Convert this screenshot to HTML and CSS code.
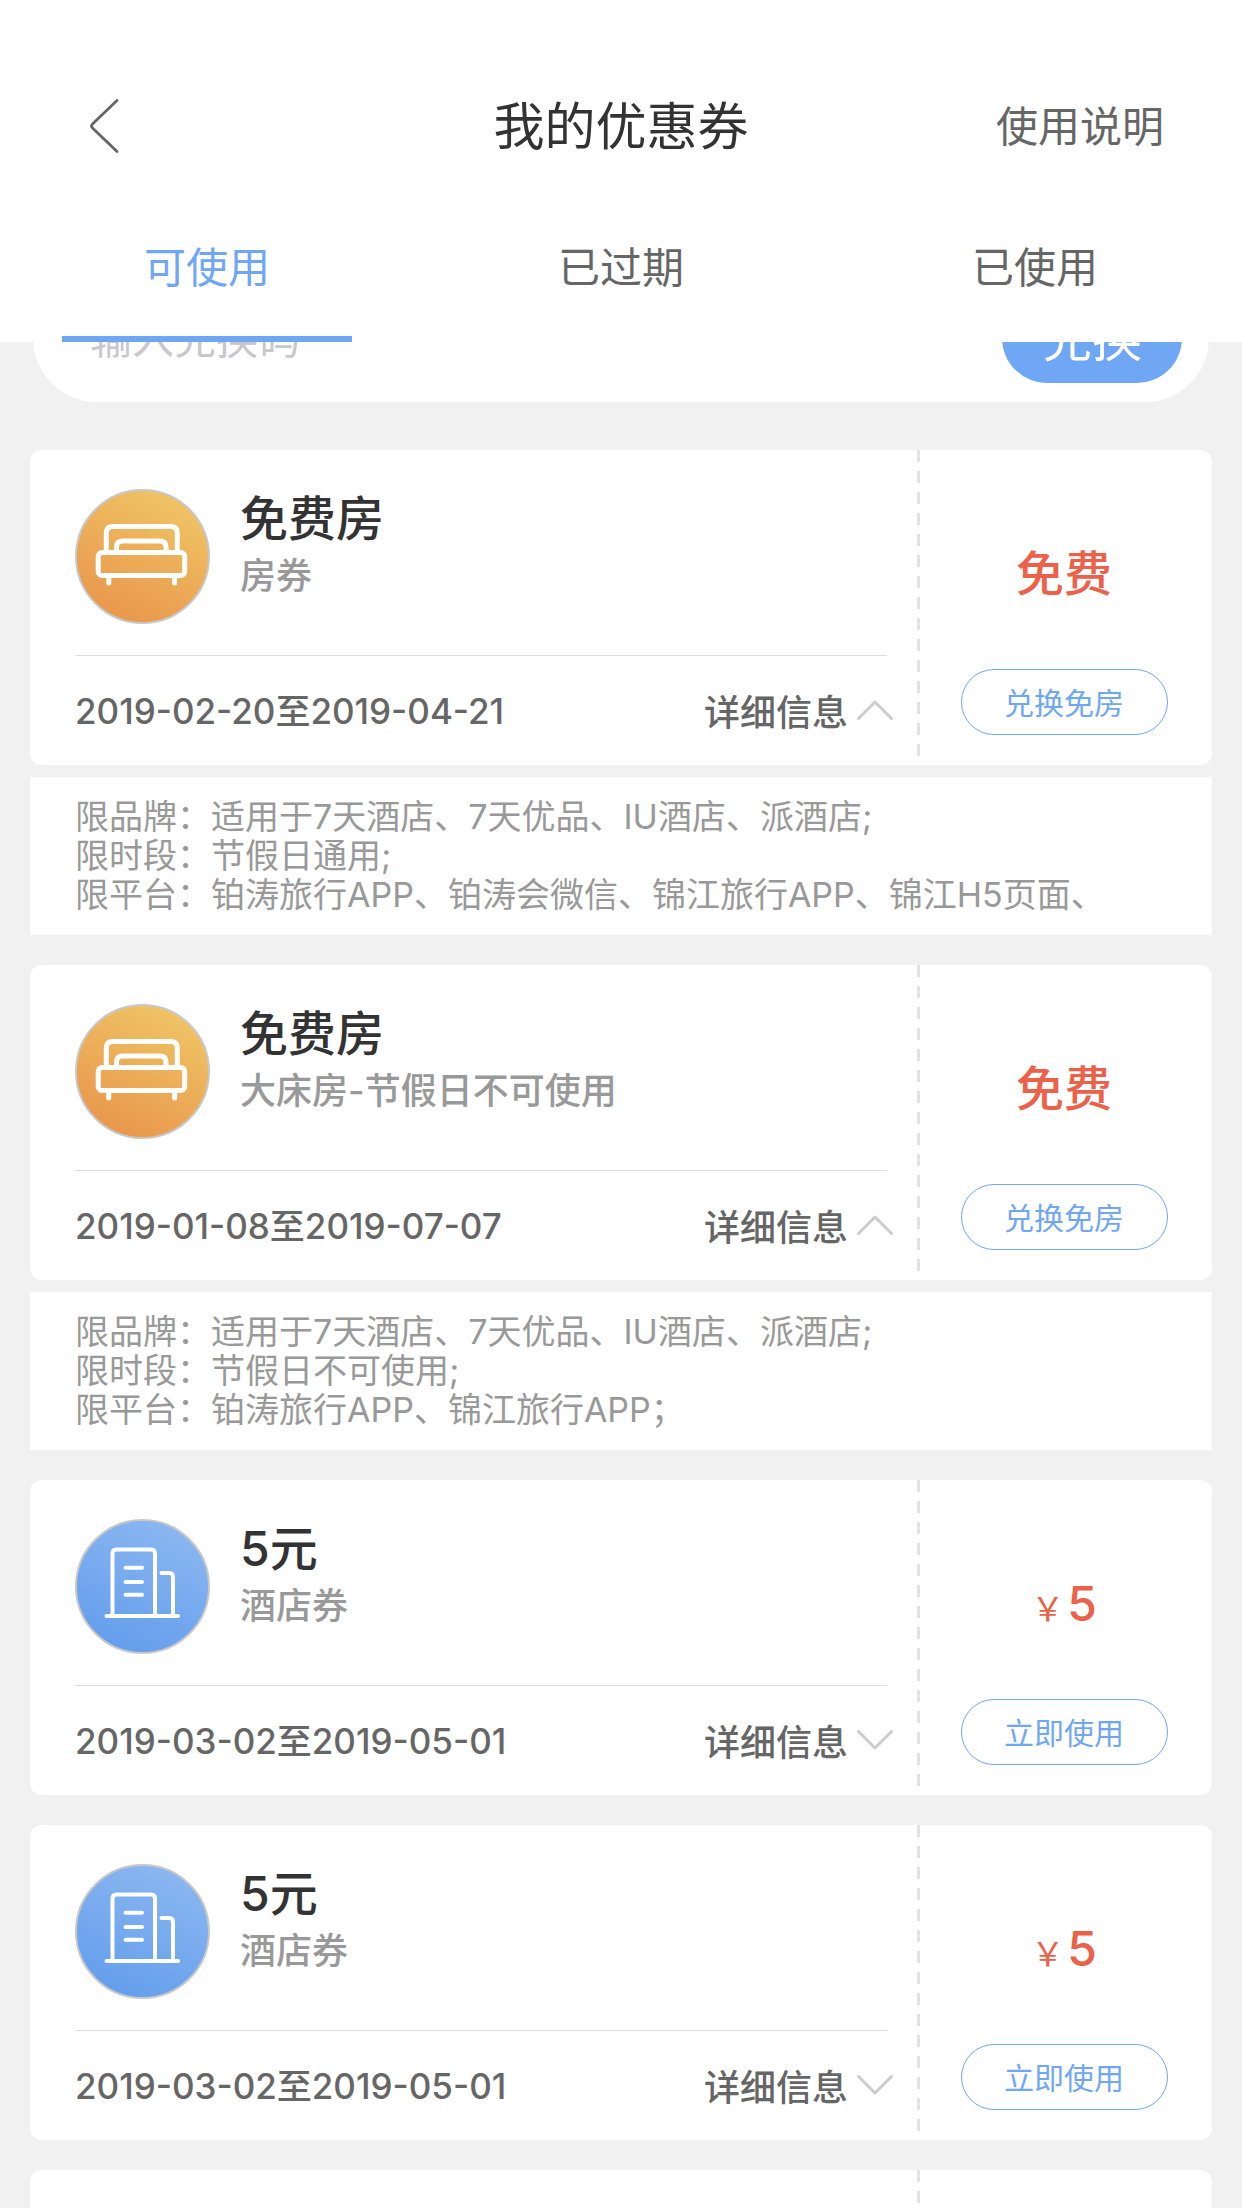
FILE: index.html
```html
<!DOCTYPE html>
<html lang="zh-CN">
<head>
<meta charset="utf-8">
<meta name="viewport" content="width=device-width, initial-scale=1">
<title>我的优惠券</title>
<link rel="stylesheet" href="styles.css">
</head>
<body>
<svg class="sprite" aria-hidden="true">
  <defs>
    <linearGradient id="gold" x1="0.3" y1="1" x2="0.75" y2="0.1">
      <stop offset="0" stop-color="#e9964b"/>
      <stop offset="1" stop-color="#efc264"/>
    </linearGradient>
    <linearGradient id="sky" x1="0.25" y1="1" x2="0.7" y2="0">
      <stop offset="0" stop-color="#629dec"/>
      <stop offset="1" stop-color="#8cb7f1"/>
    </linearGradient>
    <symbol id="bed" viewBox="0 0 135 135">
      <circle cx="67.500" cy="67.500" r="66.500" fill="url(#gold)" stroke="#c8c8c8" stroke-width="2"/>
      <g fill="none" stroke="#fff" stroke-width="5" stroke-linecap="round">
        <path d="M31.300 63V44q0-6.500 6.500-6.500h58q6.500 0 6.500 6.500v19"/>
        <path d="M41.500 63v-5q0-6 6-6h37.500q6 0 6 6v5"/>
        <rect x="23.200" y="63.500" width="86.500" height="23" rx="4"/>
        <path d="M33.800 87v7M99.600 87v7"/>
      </g>
    </symbol>
    <symbol id="building" viewBox="0 0 135 135">
      <circle cx="67.500" cy="67.500" r="66.500" fill="url(#sky)" stroke="#c8c8c8" stroke-width="2"/>
      <g fill="none" stroke="#fff" stroke-width="4" stroke-linecap="round">
        <path d="M37.500 97V34.500q0-4 4-4H76q4 0 4 4V97"/>
        <path d="M86.500 54H94q4 0 4 4v39"/>
        <path d="M31.500 97h71.500"/>
        <path d="M50.500 48.700H67M50.500 63H67M50.500 75.700H67"/>
      </g>
    </symbol>
    <symbol id="chevron" viewBox="0 0 36 20">
      <path d="M1.500 1.500 18 18 34.500 1.500" fill="none" stroke="#ccc" stroke-width="3" stroke-linecap="round" stroke-linejoin="round"/>
    </symbol>
  </defs>
</svg>

<div class="app">
  <header class="header">
    <div class="bar">
      <button class="back" type="button" aria-label="返回">
        <svg width="32" height="56" viewBox="0 0 32 56"><path d="M29 2.500 4.500 26q-2 2 0 4L29 53.500" fill="none" stroke="#666" stroke-width="2.800" stroke-linecap="round"/></svg>
      </button>
      <h1 class="title">我的优惠券</h1>
      <a class="help" href="#help">使用说明</a>
    </div>
    <nav class="tabs">
      <a class="tab tab-active" href="#usable">可使用</a>
      <a class="tab" href="#expired">已过期</a>
      <a class="tab" href="#used">已使用</a>
    </nav>
  </header>

  <main class="content">
    <form class="redeem">
      <input class="redeem-input" type="text" placeholder="输入兑换码" aria-label="输入兑换码">
      <button class="redeem-button" type="button">兑换</button>
    </form>

    <section class="list">
      <article class="coupon">
        <div class="card">
          <div class="info">
            <div class="summary">
              <svg class="badge"><use href="#bed"/></svg>
              <div>
                <h2 class="name">免费房</h2>
                <p class="kind">房券</p>
              </div>
            </div>
            <div class="meta">
              <span class="dates">2019-02-20至2019-04-21</span>
              <button class="toggle" type="button" aria-expanded="true">详细信息<svg class="chevron chevron-up"><use href="#chevron"/></svg></button>
            </div>
          </div>
          <div class="perforation"></div>
          <div class="action">
            <p class="price">免费</p>
            <button class="use" type="button">兑换免房</button>
          </div>
        </div>
        <div class="details">
          <p>限品牌：适用于7天酒店、7天优品、IU酒店、派酒店;</p>
          <p>限时段：节假日通用;</p>
          <p>限平台：铂涛旅行APP、铂涛会微信、锦江旅行APP、锦江H5页面、</p>
        </div>
      </article>

      <article class="coupon">
        <div class="card">
          <div class="info">
            <div class="summary">
              <svg class="badge"><use href="#bed"/></svg>
              <div>
                <h2 class="name">免费房</h2>
                <p class="kind">大床房-节假日不可使用</p>
              </div>
            </div>
            <div class="meta">
              <span class="dates">2019-01-08至2019-07-07</span>
              <button class="toggle" type="button" aria-expanded="true">详细信息<svg class="chevron chevron-up"><use href="#chevron"/></svg></button>
            </div>
          </div>
          <div class="perforation"></div>
          <div class="action">
            <p class="price">免费</p>
            <button class="use" type="button">兑换免房</button>
          </div>
        </div>
        <div class="details">
          <p>限品牌：适用于7天酒店、7天优品、IU酒店、派酒店;</p>
          <p>限时段：节假日不可使用;</p>
          <p>限平台：铂涛旅行APP、锦江旅行APP；</p>
        </div>
      </article>

      <article class="coupon">
        <div class="card">
          <div class="info">
            <div class="summary">
              <svg class="badge"><use href="#building"/></svg>
              <div>
                <h2 class="name">5元</h2>
                <p class="kind">酒店券</p>
              </div>
            </div>
            <div class="meta">
              <span class="dates">2019-03-02至2019-05-01</span>
              <button class="toggle" type="button" aria-expanded="false">详细信息<svg class="chevron"><use href="#chevron"/></svg></button>
            </div>
          </div>
          <div class="perforation"></div>
          <div class="action">
            <p class="price price-amount"><span class="currency">￥</span>5</p>
            <button class="use" type="button">立即使用</button>
          </div>
        </div>
      </article>

      <article class="coupon">
        <div class="card">
          <div class="info">
            <div class="summary">
              <svg class="badge"><use href="#building"/></svg>
              <div>
                <h2 class="name">5元</h2>
                <p class="kind">酒店券</p>
              </div>
            </div>
            <div class="meta">
              <span class="dates">2019-03-02至2019-05-01</span>
              <button class="toggle" type="button" aria-expanded="false">详细信息<svg class="chevron"><use href="#chevron"/></svg></button>
            </div>
          </div>
          <div class="perforation"></div>
          <div class="action">
            <p class="price price-amount"><span class="currency">￥</span>5</p>
            <button class="use" type="button">立即使用</button>
          </div>
        </div>
      </article>

      <article class="coupon">
        <div class="card">
          <div class="info"></div>
          <div class="perforation"></div>
          <div class="action"></div>
        </div>
      </article>
    </section>
  </main>
</div>
</body>
</html>
```
FILE: styles.css
```css
* {
  box-sizing: border-box;
}

body,
h1,
h2,
p {
  margin: 0;
}

body {
  background: #f1f1f1;
  color: #666;
  font-family: Inter, "Noto Sans CJK SC", sans-serif;
  font-size: 36px;
}

button,
input {
  padding: 0;
  border: 0;
  background: none;
  color: inherit;
  font: inherit;
}

a {
  color: inherit;
  text-decoration: none;
}

.sprite {
  display: block;
  width: 0;
  height: 0;
}

.app {
  display: flex;
  flex-direction: column;
  height: 100vh;
  overflow: hidden;
}

/* Header and tabs */
.header {
  flex: none;
  padding-top: 60px;
  background: #fff;
}

.bar {
  display: grid;
  grid-template-columns: 1fr auto 1fr;
  align-items: center;
  height: 132px;
  padding: 0 78px;
}

.back {
  display: flex;
  justify-self: start;
  padding-left: 10px;
}

.title,
.help {
  padding-bottom: 6px;
}

.title {
  color: #333;
  font-size: 51px;
  font-weight: 400;
}

.help {
  justify-self: end;
  font-size: 42px;
}

.tabs {
  display: grid;
  grid-template-columns: repeat(3, 1fr);
  height: 150px;
}

.tab {
  display: flex;
  align-items: center;
  justify-content: center;
  margin: 0 15%;
  border-bottom: 6px solid transparent;
  font-size: 42px;
}

.tab-active {
  border-bottom-color: #6fa7f5;
  color: #6fa7f5;
}

.content {
  flex: 1;
  min-height: 0;
  overflow: hidden;
}

.redeem {
  display: flex;
  align-items: center;
  height: 128px;
  margin: -68px 33px 48px;
  padding: 0 27px 0 57px;
  border-radius: 64px;
  background: #fff;
}

.redeem-input {
  flex: 1;
  min-width: 0;
  height: 90px;
  font-size: 42px;
}

.redeem-input::placeholder {
  color: #c7c7cc;
}

.redeem-button {
  width: 180px;
  height: 90px;
  padding-bottom: 6px;
  border-radius: 45px;
  background: #6fa7f5;
  color: #fff;
  font-size: 50px;
}

/* Coupons */
.list {
  display: flex;
  flex-direction: column;
  gap: 30px;
  padding: 0 30px;
}

.card {
  display: grid;
  grid-template-columns: 1fr 3px 292px;
  min-height: 315px;
  border-radius: 12px;
  background: #fff;
}

.info {
  display: flex;
  flex-direction: column;
  padding: 39px 24px 0 45px;
}

.summary {
  display: flex;
  gap: 30px;
  height: 167px;
  margin-right: 6px;
  border-bottom: 1px solid #ddd;
}

.badge {
  flex: none;
  width: 135px;
  height: 135px;
}

.name {
  color: #333;
  font-size: 48px;
  font-weight: 500;
  line-height: 60px;
}

.kind {
  color: #999;
  font-weight: 500;
  line-height: 54px;
}

.meta {
  display: flex;
  flex: 1;
  align-items: center;
  justify-content: space-between;
  padding-bottom: 2px;
  font-weight: 500;
}

.dates {
  padding-bottom: 2px;
  font-size: 35px;
}

.toggle {
  display: flex;
  align-items: center;
  gap: 9px;
}

.chevron {
  width: 36px;
  height: 20px;
}

.chevron-up {
  transform: rotate(180deg);
}

.perforation {
  margin-bottom: 9px;
  background: repeating-linear-gradient(#e3e3e3 0 12px, transparent 12px 21px);
}

.action {
  display: flex;
  flex-direction: column;
  align-items: center;
  justify-content: flex-end;
  gap: 62px;
  padding: 0 4px 30px 0;
}

.price {
  color: #ec6149;
  font-size: 48px;
  font-weight: 500;
  line-height: 66px;
}

.price-amount {
  line-height: 56px;
}

.currency {
  margin-right: 3px;
  font-size: 33px;
  font-weight: 400;
}

.use {
  width: 207px;
  height: 66px;
  padding-bottom: 2px;
  border: 1px solid #6fa7f5;
  border-radius: 33px;
  color: #6fa7f5;
  font-size: 30px;
}

.details {
  margin-top: 12px;
  padding: 20px 45px 21px;
  background: #fff;
  color: #999;
  font-size: 34px;
  line-height: 39px;
}
```
